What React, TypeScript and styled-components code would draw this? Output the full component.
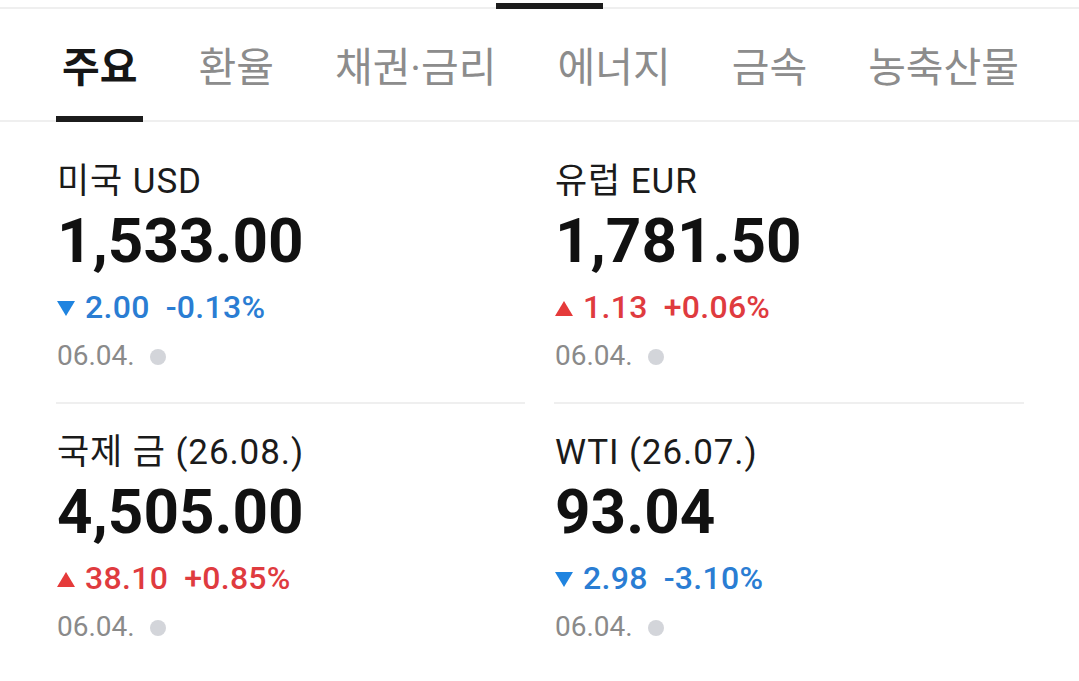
import React from "react";
import styled, { createGlobalStyle } from "styled-components";

type Quote = {
  name: string;
  value: string;
  dir: "up" | "down";
  change: string;
  rate: string;
  date: string;
};

const TABS = ["주요", "환율", "채권·금리", "에너지", "금속", "농축산물"];

const QUOTES: Quote[] = [
  { name: "미국 USD", value: "1,533.00", dir: "down", change: "2.00", rate: "-0.13%", date: "06.04." },
  { name: "유럽 EUR", value: "1,781.50", dir: "up", change: "1.13", rate: "+0.06%", date: "06.04." },
  { name: "국제 금 (26.08.)", value: "4,505.00", dir: "up", change: "38.10", rate: "+0.85%", date: "06.04." },
  { name: "WTI (26.07.)", value: "93.04", dir: "down", change: "2.98", rate: "-3.10%", date: "06.04." },
];

const App = () => {
  return (
    <Page>
      <GlobalStyle />
      <Rail>
        <RailThumb />
      </Rail>

      <TabBar>
        {TABS.map((t, i) => (
          <Tab key={t} $active={i === 0}>
            {t}
          </Tab>
        ))}
      </TabBar>

      <Grid>
        {QUOTES.map((q, i) => (
          <Card key={q.name} $divided={i < 2}>
            <Name>{q.name}</Name>
            <Value>{q.value}</Value>
            <Change $dir={q.dir}>
              <Arrow $dir={q.dir} />
              <span>{q.change}</span>
              <Rate>{q.rate}</Rate>
            </Change>
            <DateRow>
              {q.date}
              <Dot />
            </DateRow>
          </Card>
        ))}
      </Grid>
    </Page>
  );
};

export default App;

const GlobalStyle = createGlobalStyle`
  body {
    margin: 0;
    background: #ffffff;
    font-family: Roboto, "Noto Sans CJK KR", sans-serif;
  }
`;

const Page = styled.div`
  width: 1079px;
  min-height: 681px;
  background: #ffffff;
`;

const Rail = styled.div`
  height: 9px;
  display: flex;
  align-items: flex-end;
  background: linear-gradient(to bottom, transparent 7px, #efefef 7px);
`;

const RailThumb = styled.div`
  margin-left: 496px;
  width: 107px;
  height: 6px;
  background: #1c1c1c;
`;

const TabBar = styled.div`
  display: flex;
  gap: 49px;
  padding: 0 56px;
  border-bottom: 2px solid #efefef;
`;

const Tab = styled.div<{ $active?: boolean }>`
  padding: 35px 6px 24px;
  margin-bottom: -2px;
  font-family: Roboto, "Noto Sans CJK KR", sans-serif;
  font-size: 41px;
  line-height: 48px;
  white-space: nowrap;
  font-weight: ${(p) => (p.$active ? 700 : 400)};
  color: ${(p) => (p.$active ? "#161616" : "#8c8c8c")};
  border-bottom: 6px solid ${(p) => (p.$active ? "#1c1c1c" : "transparent")};
`;

const Grid = styled.div`
  display: grid;
  grid-template-columns: 469px 470px;
  column-gap: 29px;
  padding: 11px 55px 0 56px;
`;

const Card = styled.div<{ $divided?: boolean }>`
  display: flex;
  flex-direction: column;
  padding: 29px 0 29px 1px;
  border-bottom: 2px solid ${(p) => (p.$divided ? "#efefef" : "transparent")};
`;

const Name = styled.div`
  font-size: 35px;
  line-height: 40px;
  letter-spacing: 0.9px;
  color: #1b1b1b;
  white-space: nowrap;
`;

const Value = styled.div`
  margin-top: 4px;
  font-size: 62px;
  line-height: 70px;
  font-weight: 700;
  color: #111111;
`;

const Change = styled.div<{ $dir: "up" | "down" }>`
  margin-top: 12px;
  display: flex;
  align-items: center;
  font-size: 32px;
  line-height: 38px;
  font-weight: 500;
  letter-spacing: 0.3px;
  color: ${(p) => (p.$dir === "up" ? "#df3b3f" : "#2a7dd3")};
`;

const Arrow = styled.span<{ $dir: "up" | "down" }>`
  width: 0;
  height: 0;
  margin: 3px 10px 0 0;
  border-left: 9px solid transparent;
  border-right: 9px solid transparent;
  ${(p) =>
    p.$dir === "up"
      ? "border-bottom: 15px solid #e53a3a;"
      : "border-top: 15px solid #1f84e0;"}
`;

const Rate = styled.span`
  margin-left: 16px;
`;

const DateRow = styled.div`
  margin-top: 13px;
  display: flex;
  align-items: center;
  font-size: 28px;
  line-height: 34px;
  color: #8a8a8a;
`;

const Dot = styled.span`
  width: 16px;
  height: 16px;
  margin: 0 0 -2px 15px;
  border-radius: 50%;
  background: #d3d5da;
`;
